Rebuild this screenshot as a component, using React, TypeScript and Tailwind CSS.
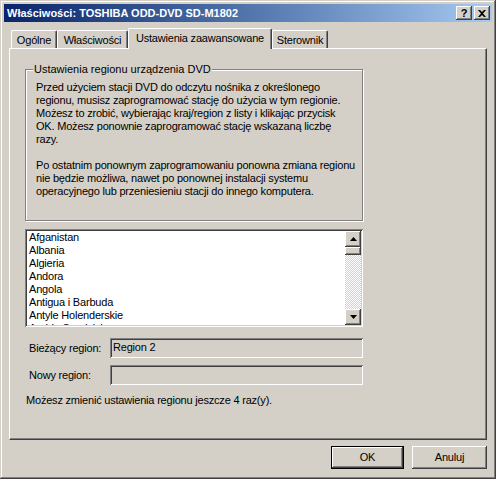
import React from 'react';

const COUNTRIES = [
  'Afganistan',
  'Albania',
  'Algieria',
  'Andora',
  'Angola',
  'Antigua i Barbuda',
  'Antyle Holenderskie',
  'Arabia Saudyjska',
  'Argentyna',
];

const TABS = [
  { label: 'Ogólne', w: 'w-[46px]' },
  { label: 'Właściwości', w: 'w-[71px]' },
  { label: 'Ustawienia zaawansowane', w: 'w-[144px]', active: true },
  { label: 'Sterownik', w: 'w-[56px]' },
];

const raised =
  'shadow-[inset_-1px_-1px_#404040,inset_1px_1px_#ffffff,inset_-2px_-2px_#808080,inset_2px_2px_#d4d0c8]';
const sunken =
  'shadow-[inset_1px_1px_#808080,inset_-1px_-1px_#ffffff,inset_2px_2px_#404040,inset_-2px_-2px_#d4d0c8]';

function Arrow({ up }: { up?: boolean }) {
  return (
    <svg width="7" height="4" viewBox="0 0 7 4">
      <path d={up ? 'M3.5 0L7 4H0z' : 'M0 0h7L3.5 4z'} fill="#000" />
    </svg>
  );
}

export default function App() {
  return (
    <div className="w-[496px] h-[479px] bg-[#d4d0c8] p-[4px] flex flex-col text-black text-[11px] leading-[13px] tracking-[-0.2px] font-['Liberation_Sans',Arial,sans-serif] shadow-[inset_-1px_-1px_#404040,inset_1px_1px_#d4d0c8,inset_-2px_-2px_#808080,inset_2px_2px_#ffffff]">
      {/* Title bar */}
      <div className="h-[18px] flex items-center pl-[3px] pr-[2px] bg-gradient-to-r from-[#0a246a] to-[#a6caf0]">
        <span className="text-white font-bold text-[11px] tracking-normal flex-1">Właściwości: TOSHIBA ODD-DVD SD-M1802</span>
        <div className={`w-[16px] h-[14px] bg-[#d4d0c8] flex items-center justify-center font-bold text-[11px] ${raised}`}>?</div>
        <div className={`w-[16px] h-[14px] ml-[2px] bg-[#d4d0c8] flex items-center justify-center ${raised}`}>
          <svg width="8" height="7" viewBox="0 0 8 7">
            <path d="M0 0h2l2 2 2-2h2L5 3.5 8 7H6L4 5 2 7H0l3-3.5z" fill="#000" />
          </svg>
        </div>
      </div>

      {/* Tabs */}
      <div className="flex items-end h-[26px] ml-[7px] relative z-10">
        {TABS.map((t) =>
          t.active ? (
            <div
              key={t.label}
              className={`${t.w} h-[21px] -mb-[1px] bg-[#d4d0c8] border-t border-l border-white border-r border-r-[#404040] rounded-t-[2px] shadow-[inset_-1px_0_#808080] flex items-start justify-center pt-[3px] whitespace-nowrap`}
            >
              {t.label}
            </div>
          ) : (
            <div
              key={t.label}
              className={`${t.w} h-[18px] border-t border-l border-white border-r border-r-[#404040] rounded-t-[2px] shadow-[inset_-1px_0_#808080] flex items-start justify-center pt-[3px] whitespace-nowrap`}
            >
              {t.label}
            </div>
          )
        )}
      </div>

      {/* Tab panel */}
      <div className="mx-[5px] h-[392px] border-t border-l border-white border-r border-b border-r-[#404040] border-b-[#404040] shadow-[inset_-1px_-1px_#808080] pl-[15px] pt-[15px] flex flex-col">
        <div className="w-[338px] flex flex-col">
          {/* Group box */}
          <div className="relative mt-[5px] h-[152px] border border-[#808080] shadow-[inset_1px_1px_#ffffff,1px_1px_#ffffff] pl-[10px] pt-[11px] whitespace-nowrap">
            <span className="absolute -top-[7px] left-[7px] bg-[#d4d0c8] px-[1px] tracking-normal">Ustawienia regionu urządzenia DVD</span>
            <p>
              Przed użyciem stacji DVD do odczytu nośnika z określonego
              <br />
              regionu, musisz zaprogramować stację do użycia w tym regionie.
              <br />
              Możesz to zrobić, wybierając kraj/region z listy i klikając przycisk
              <br />
              OK. Możesz ponownie zaprogramować stację wskazaną liczbę
              <br />
              razy.
            </p>
            <p className="mt-[13px]">
              Po ostatnim ponownym zaprogramowaniu ponowna zmiana regionu
              <br />
              nie będzie możliwa, nawet po ponownej instalacji systemu
              <br />
              operacyjnego lub przeniesieniu stacji do innego komputera.
            </p>
          </div>

          {/* List box */}
          <div className={`mt-[8px] h-[98px] bg-white p-[2px] flex ${sunken}`}>
            <div className="flex-1 overflow-hidden pl-[2px]">
              {COUNTRIES.map((c) => (
                <div key={c} className="h-[13px] whitespace-nowrap">{c}</div>
              ))}
            </div>
            <div className="w-[16px] flex flex-col">
              <div className={`h-[16px] bg-[#d4d0c8] flex items-center justify-center ${raised}`}>
                <Arrow up />
              </div>
              <div className={`h-[8px] bg-[#d4d0c8] ${raised}`} />
              <div className="flex-1 bg-[repeating-conic-gradient(#d4d0c8_0_25%,#ffffff_0_50%)] [background-size:2px_2px]" />
              <div className={`h-[16px] bg-[#d4d0c8] flex items-center justify-center ${raised}`}>
                <Arrow />
              </div>
            </div>
          </div>

          {/* Region fields */}
          <div className="mt-[11px] flex items-center">
            <span className="w-[85px] pl-[4px] whitespace-nowrap">Bieżący region:</span>
            <div className={`w-[253px] h-[20px] pl-[3px] pt-[3px] whitespace-nowrap ${sunken}`}>Region 2</div>
          </div>
          <div className="mt-[7px] flex items-center">
            <span className="w-[85px] pl-[4px] whitespace-nowrap">Nowy region:</span>
            <div className={`w-[253px] h-[20px] ${sunken}`} />
          </div>
          <p className="mt-[9px] pl-[1px] whitespace-nowrap">Możesz zmienić ustawienia regionu jeszcze 4 raz(y).</p>
        </div>
      </div>

      {/* Buttons */}
      <div className="flex justify-end gap-[8px] mt-[6px] mr-[5px]">
        <div className="w-[73px] h-[23px] border border-black flex">
          <div className={`flex-1 flex items-center justify-center ${raised}`}>OK</div>
        </div>
        <div className={`w-[75px] h-[23px] flex items-center justify-center ${raised}`}>Anuluj</div>
      </div>
    </div>
  );
}
